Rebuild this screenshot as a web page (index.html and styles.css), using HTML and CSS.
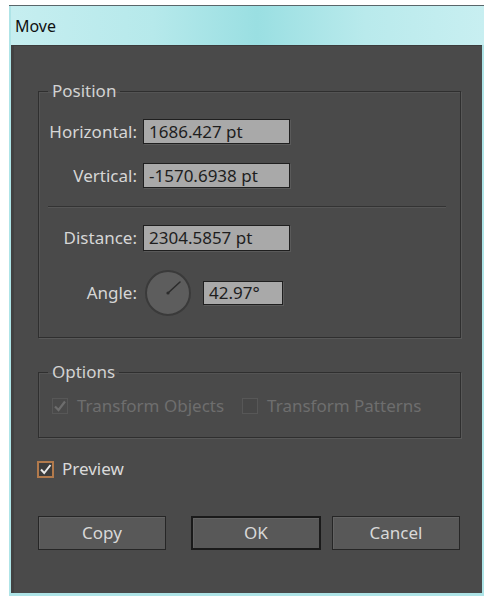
FILE: index.html
```html
<!DOCTYPE html>
<html lang="en">
<head>
<meta charset="utf-8">
<title>Move</title>
<link rel="stylesheet" href="styles.css">
</head>
<body>
<div class="window">
  <div class="titlebar">Move</div>
  <div class="panel">
    <fieldset class="group group-position">
      <legend>Position</legend>
      <div class="fields fields-top">
        <span class="lbl">Horizontal:</span>
        <div class="field">1686.427 pt</div>
        <span class="lbl">Vertical:</span>
        <div class="field">-1570.6938 pt</div>
      </div>
      <div class="sep"></div>
      <div class="fields fields-bottom">
        <span class="lbl">Distance:</span>
        <div class="field field-tall">2304.5857 pt</div>
        <span class="lbl">Angle:</span>
        <div class="angle">
          <svg class="dial" width="48" height="48" viewBox="0 0 48 48">
            <circle cx="24" cy="24" r="22" fill="#5d5d5d" stroke="#3a3a3a" stroke-width="2"/>
            <line x1="24" y1="24" x2="36" y2="13" stroke="#2c2c2c" stroke-width="1.6" stroke-linecap="round"/>
            <circle cx="24" cy="24" r="1.6" fill="#2c2c2c"/>
          </svg>
          <div class="field field-short">42.97°</div>
        </div>
      </div>
    </fieldset>

    <fieldset class="group group-options">
      <legend>Options</legend>
      <div class="opts">
        <span class="check check-off">
          <svg width="16" height="16" viewBox="0 0 16 16">
            <rect x="0.5" y="0.5" width="15" height="15" fill="none" stroke="#575757"/>
            <path d="M3 8.5 L6.5 12 L13 3.5" fill="none" stroke="#6d6d6d" stroke-width="2.2"/>
          </svg>
          <span class="opt-text">Transform Objects</span>
        </span>
        <span class="check check-off">
          <svg width="16" height="16" viewBox="0 0 16 16">
            <rect x="0.5" y="0.5" width="15" height="15" fill="#474747" stroke="#575757"/>
          </svg>
          <span class="opt-text">Transform Patterns</span>
        </span>
      </div>
    </fieldset>

    <div class="preview">
      <svg width="17" height="17" viewBox="0 0 17 17">
        <rect x="1" y="1" width="15" height="15" fill="#3c3c3c" stroke="#b27a4c" stroke-width="2"/>
        <path d="M4 8.5 L7.2 12 L13.5 4" fill="none" stroke="#e8e8e8" stroke-width="2"/>
      </svg>
      <span>Preview</span>
    </div>

    <div class="buttons">
      <div class="btn">Copy</div>
      <div class="btn btn-default">OK</div>
      <div class="btn btn-cancel">Cancel</div>
    </div>
  </div>
</div>
</body>
</html>
```

FILE: styles.css
```css
html, body {
  margin: 0;
  padding: 0;
  background: #ffffff;
}

body {
  font-family: "Noto Sans", "Open Sans", sans-serif;
}

.window {
  margin: 5px 0 0 9px;
  width: 475px;
  border-top: 1px solid #59666a;
  background: #aee4e7;
  padding: 0 0 3px 2px;
  box-sizing: border-box;
}

.titlebar {
  height: 39px;
  line-height: 40px;
  padding-left: 4px;
  font-size: 16px;
  color: #101010;
  background: linear-gradient(90deg, #c6eef0 0%, #b6e9eb 30%, #9adfe2 52%, #b9eaec 75%, #c8eff1 100%);
}

.panel {
  background: #4a4a4a;
  border-top: 1px solid #3c3c3c;
  border-left: 3px solid #414141;
  margin-right: 2px;
  padding: 36px 21px 43px 24px;
  color: #d6d6d6;
  font-size: 17px;
}

.group {
  margin: 0;
  padding: 0;
  min-inline-size: 0;
  border: 1px solid #2f2f2f;
  box-shadow: 1px 1px 0 #585858, inset 1px 1px 0 #545454;
}

.group legend {
  margin-left: 9px;
  padding: 0 4px;
  line-height: 18px;
  color: #d2d2d2;
}

.fields {
  display: grid;
  grid-template-columns: 98px 147px;
  column-gap: 6px;
  row-gap: 19px;
  align-items: center;
}

.fields-top {
  padding-top: 19px;
}

.fields-bottom {
  padding-bottom: 21px;
}

.lbl {
  text-align: right;
  line-height: 20px;
}

.field {
  height: 25px;
  box-sizing: border-box;
  border: 1px solid #1f1f1f;
  background: #a9a9a9;
  color: #1e1e1e;
  padding-left: 5px;
  line-height: 23px;
  white-space: nowrap;
  box-shadow: 1px 1px 0 #5a5a5a;
}

.field-tall {
  height: 26px;
  line-height: 24px;
}

.field-short {
  width: 80px;
  height: 24px;
  line-height: 22px;
}

.sep {
  height: 1px;
  margin: 18px 14px 18px 9px;
  background: #333333;
  box-shadow: 0 1px 0 #565656;
}

.angle {
  display: flex;
  align-items: center;
  gap: 11px;
  height: 46px;
}

.dial {
  display: block;
  margin: -1px 0 0 1px;
}

.group-options {
  margin-top: 25px;
}

.opts {
  display: flex;
  align-items: center;
  gap: 18px;
  padding: 15px 0 21px 13px;
  line-height: 20px;
}

.check {
  display: flex;
  align-items: center;
  gap: 9px;
}

.check svg {
  display: block;
}

.opt-text {
  color: #6e6e6e;
}

.preview {
  display: flex;
  align-items: center;
  gap: 8px;
  margin-top: 21px;
  line-height: 20px;
  color: #dadada;
}

.preview svg {
  display: block;
  margin-left: -1px;
}

.buttons {
  display: flex;
  margin-top: 37px;
}

.btn {
  width: 128px;
  height: 34px;
  box-sizing: border-box;
  border: 1px solid #262626;
  background: #585858;
  box-shadow: inset 1px 1px 0 #636363;
  text-align: center;
  line-height: 31px;
  color: #d8d8d8;
}

.btn-default {
  width: 130px;
  margin-left: 25px;
  border: 2px solid #1a1a1a;
  line-height: 29px;
}

.btn-cancel {
  margin-left: 11px;
}
```
